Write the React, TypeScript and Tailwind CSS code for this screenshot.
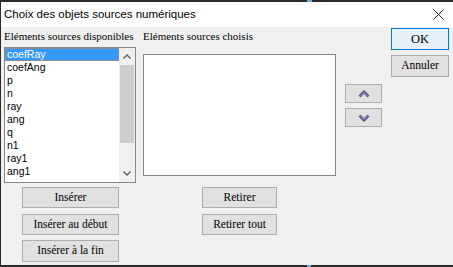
import React from 'react'

const items = ['coefRay', 'coefAng', 'p', 'n', 'ray', 'ang', 'q', 'n1', 'ray1', 'ang1']

const serif = { fontFamily: '"Liberation Serif", "Times New Roman", serif' }
const sans = { fontFamily: '"Liberation Sans", Arial, sans-serif' }

function Btn({ children, className = '' }: { children: React.ReactNode; className?: string }) {
  return (
    <button
      className={`flex items-center justify-center border border-[#adadad] bg-[#e1e1e1] text-[11.5px] text-black leading-none ${className}`}
      style={serif}
    >
      {children}
    </button>
  )
}

function Chev({ up }: { up?: boolean }) {
  return (
    <svg width="12" height="8" viewBox="0 0 12 8">
      <g transform={up ? '' : 'rotate(180 6 4)'}>
        <polyline points="1.5,6.5 6,2 10.5,6.5" fill="none" stroke="#5b5b8c" strokeWidth="3" strokeLinejoin="miter" />
        <polyline points="2.5,6 6,2.8 9.5,6" fill="none" stroke="#a4a4cc" strokeWidth="0.9" />
      </g>
    </svg>
  )
}

export default function App() {
  return (
    <div className="w-[453px] h-[267px] overflow-hidden bg-[#cdcdcd] flex flex-col">
      {/* window */}
      <div className="h-[265px] flex flex-col border-l border-[#2a2a2a] bg-[#f0f0f0]">
        <div className="h-[2px] shrink-0 bg-[#2b2b2b] flex">
          <div className="ml-[306px] w-[5px] bg-[#7aa6d6]" />
        </div>
        {/* title bar */}
        <div className="h-[25px] shrink-0 bg-white flex items-center justify-between pl-[3px] pr-[9px]">
          <span className="text-[11.5px] text-black" style={sans}>
            Choix des objets sources numériques
          </span>
          <svg width="11" height="11" viewBox="0 0 11 11">
            <path d="M0.5 0.5 L10.5 10.5 M10.5 0.5 L0.5 10.5" stroke="#222" strokeWidth="1" />
          </svg>
        </div>

        <div className="flex-1 flex">
          {/* available */}
          <div className="ml-[3px] w-[132px] flex flex-col">
            <div className="mt-[3px] h-[13px] text-[11px] leading-[13px] whitespace-nowrap text-black" style={serif}>
              Eléments sources disponibles
            </div>
            <div className="mt-[4px] h-[136px] border border-[#828790] bg-white flex">
              <div className="flex-1 flex flex-col">
                {items.map((it, i) => (
                  <div
                    key={it}
                    className={`h-[13px] pl-[1px] text-[10.5px] leading-[11px] overflow-hidden ${
                      i === 0 ? 'bg-[#3399ff] text-white border border-dotted border-[#e07b39]' : 'text-black border border-transparent'
                    }`}
                    style={sans}
                  >
                    {it}
                  </div>
                ))}
              </div>
              <div className="w-[16px] bg-[#f0f0f0] flex flex-col items-center">
                <div className="h-[17px] flex items-center justify-center">
                  <svg width="8" height="5" viewBox="0 0 8 5">
                    <polyline points="0.5,4.5 4,1 7.5,4.5" fill="none" stroke="#606060" strokeWidth="1.4" />
                  </svg>
                </div>
                <div className="w-[14px] h-[78px] bg-[#cdcdcd]" />
                <div className="flex-1" />
                <div className="h-[17px] flex items-center justify-center">
                  <svg width="8" height="5" viewBox="0 0 8 5">
                    <polyline points="0.5,0.5 4,4 7.5,0.5" fill="none" stroke="#606060" strokeWidth="1.4" />
                  </svg>
                </div>
              </div>
            </div>
            <div className="ml-[18px] w-[97px] flex flex-col">
              <Btn className="mt-[4px] h-[21px]">Insérer</Btn>
              <Btn className="mt-[6px] h-[21px]">Insérer au début</Btn>
              <Btn className="mt-[5px] h-[22px]">Insérer à la fin</Btn>
            </div>
          </div>

          {/* chosen */}
          <div className="ml-[7px] w-[193px] flex flex-col">
            <div className="mt-[3px] h-[13px] text-[11px] leading-[13px] whitespace-nowrap text-black" style={serif}>
              Eléments sources choisis
            </div>
            <div className="mt-[11px] h-[122px] border border-[#828790] bg-white" />
            <div className="ml-[59px] w-[75px] flex flex-col">
              <Btn className="mt-[11px] h-[21px]">Retirer</Btn>
              <Btn className="mt-[6px] h-[21px]">Retirer tout</Btn>
            </div>
          </div>

          {/* order */}
          <div className="ml-[9px] w-[37px] flex flex-col">
            <Btn className="mt-[57px] h-[19px]">
              <Chev up />
            </Btn>
            <Btn className="mt-[5px] h-[19px]">
              <Chev />
            </Btn>
          </div>

          {/* ok / cancel */}
          <div className="ml-[9px] w-[58px] flex flex-col">
            <button
              className="mt-[1px] h-[22px] border border-[#0078d7] bg-[#e5f1fb] text-[12.5px] text-black leading-none"
              style={serif}
            >
              OK
            </button>
            <Btn className="mt-[5px] h-[22px]">Annuler</Btn>
          </div>
        </div>
      </div>
      <div className="h-[2px] shrink-0 bg-[#2b2b2b] flex">
        <div className="ml-[307px] w-[4px] bg-[#7aa6d6]" />
      </div>
    </div>
  )
}
